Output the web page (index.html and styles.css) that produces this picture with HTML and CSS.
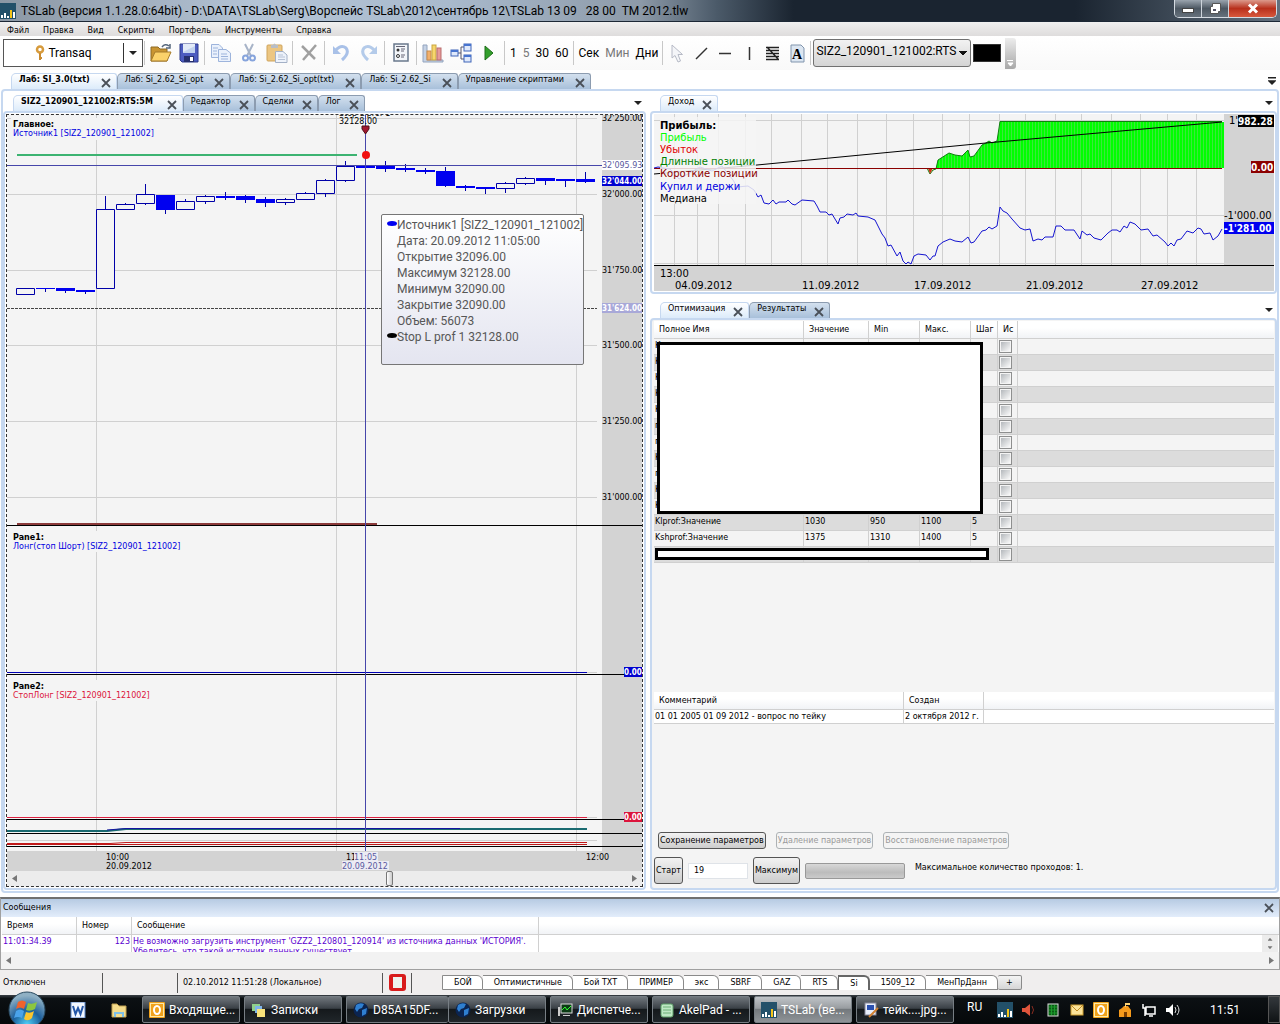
FILE: index.html
```html
<!DOCTYPE html>
<html lang="ru">
<head>
  <meta charset="UTF-8" />
  <meta name="viewport" content="width=device-width, initial-scale=1.0" />
  <title>TSLab</title>
  <link rel="stylesheet" href="styles.css">
</head>
<body>
  <svg class="defs" aria-hidden="true">
    <symbol id="close" viewBox="0 0 10 10"><path d="M1 1L9 9M9 1L1 9" fill="none" stroke="#4a5058" stroke-width="1.8"/></symbol>
    <symbol id="tslab" viewBox="0 0 16 16"><path d="M0 0H16V16H0Z" fill="#235069"/><path d="M1 12H3V15H1ZM4 10H6V15H4ZM7 13H9V15H7ZM13 9H15V15H13Z" fill="#fff"/><path d="M10 7H12V15H10Z" fill="#f5c518"/></symbol>
    <symbol id="globe" viewBox="0 0 16 16"><circle cx="8" cy="8" r="7.500" fill="#0b2450"/><path d="M3 3Q7 0 11 2L9 6L6 7L4 10L2 7ZM9 8L14 6L13 12L9 14Z" fill="#2f7fd0"/></symbol>
    <symbol id="outlook" viewBox="0 0 16 16"><rect width="16" height="16" rx="1" fill="#f0a21c"/><rect x="1.500" y="1.500" width="13" height="13" fill="none" stroke="#fde9a8"/><ellipse cx="8" cy="8" rx="3" ry="4" fill="none" stroke="#fff" stroke-width="2"/></symbol>
  </svg>

  <header class="titlebar">
    <svg class="icon16"><use href="#tslab"/></svg>
    <span class="title">TSLab (версия 1.1.28.0:64bit) - D:\DATA\TSLab\Serg\Ворспейс TSLab\2012\сентябрь 12\TSLab 13 09 &nbsp; 28 00 &nbsp;TM 2012.tlw</span>
    <div class="win-buttons">
      <button aria-label="Свернуть"><svg width="12" height="10"><rect x="0.500" y="4.500" width="11" height="4" fill="#fff" stroke="#444"/></svg></button>
      <button aria-label="Восстановить"><svg width="12" height="12"><path d="M3.500 .5H11.500V8.500H9.500V10.500H1.500V3.500H3.500Z" fill="#fff" stroke="#555"/><rect x="4" y="6" width="3" height="2" fill="#556"/></svg></button>
      <button class="win-close" aria-label="Закрыть"><svg width="12" height="11"><path d="M2 1.500L10 9.500M10 1.500L2 9.500" stroke="#fff" stroke-width="3"/></svg></button>
    </div>
  </header>

  <nav class="menu">
    <button>Файл</button>
    <button>Правка</button>
    <button>Вид</button>
    <button>Скрипты</button>
    <button>Портфель</button>
    <button>Инструменты</button>
    <button>Справка</button>
  </nav>

  <div class="toolbar">
    <div class="split">
      <button class="split-main">
        <svg width="10" height="16"><circle cx="5" cy="4.500" r="3" fill="none" stroke="#d79b3c" stroke-width="2.500"/><path d="M5 8V15M5 13H7" stroke="#c98b30" stroke-width="2"/></svg>
        Transaq
      </button>
      <button class="split-arrow" aria-label="Выбор источника"><i class="arrow"></i></button>
    </div>
    <i class="sep"></i>
    <button class="tool" aria-label="Открыть"><svg width="22" height="20" viewBox="0 0 22 20"><path d="M1 4H8L10 6H17V18H1Z" fill="#c99532" stroke="#8d6a25"/><path d="M1 18L5 9H21L17 18Z" fill="#fbd26a" stroke="#a57b2a"/><path d="M12 4Q15 0 19 3M20 1V5H16" fill="none" stroke="#56677c" stroke-width="1.500"/></svg></button>
    <button class="tool" aria-label="Сохранить"><svg width="20" height="20" viewBox="0 0 20 20"><path d="M1 1H19V19H3L1 17Z" fill="#4d5cc0" stroke="#2d3a8c"/><rect x="4" y="1" width="12" height="9" fill="#e3ebf8"/><path d="M4 9L16 3V10H4Z" fill="#c2d3ef"/><rect x="5" y="13" width="10" height="6" fill="#26306e"/><rect x="11" y="14" width="3" height="4" fill="#fff"/></svg></button>
    <i class="sep"></i>
    <button class="tool" aria-label="Копировать"><svg width="22" height="20" viewBox="0 0 22 20"><g fill="#eaf1fc" stroke="#9db4dc"><path d="M1.500 1.500H9L12.500 5V14.500H1.500Z"/><path d="M8.500 6.500H16L20.500 10V18.500H8.500Z"/><path d="M3 5H8M3 8H7M3 11H7M11 11H17M11 13.500H18M11 16H18"/></g></svg></button>
    <button class="tool" aria-label="Вырезать"><svg width="16" height="20" viewBox="0 0 16 20"><path d="M4 1L10 13M12 1L6 13" stroke="#a8b4c8" stroke-width="2"/><g fill="none" stroke="#86a4dc" stroke-width="2"><circle cx="4.500" cy="15" r="2.500"/><circle cx="11.500" cy="15" r="2.500"/></g></svg></button>
    <button class="tool" aria-label="Вставить"><svg width="22" height="20" viewBox="0 0 22 20"><rect x="1" y="2" width="15" height="16" rx="1" fill="#ecc682" stroke="#cfa45c"/><path d="M5 5V2H7Q8.500 -1 10 2H12V5Z" fill="#b9bec6"/><path d="M9.500 8.500H17L21 12V19.500H9.500Z" fill="#eef3fb" stroke="#a3b0c6"/><path d="M12 12H17M12 14H19M12 16.500H19" stroke="#b7c2d6"/></svg></button>
    <i class="sep"></i>
    <button class="tool" aria-label="Удалить"><svg width="18" height="20" viewBox="0 0 18 20"><path d="M2 3L15 16M16 2L3 17" stroke="#a0a0a0" stroke-width="2.500"/></svg></button>
    <i class="sep"></i>
    <button class="tool" aria-label="Отменить"><svg width="18" height="18" viewBox="0 0 18 18"><path d="M3 7Q9 0 14 4Q18 9 10 16" fill="none" stroke="#a9c1e8" stroke-width="3"/><path d="M1 2V10H9Z" fill="#a9c1e8"/></svg></button>
    <button class="tool" aria-label="Повторить"><svg width="18" height="18" viewBox="0 0 18 18"><path d="M15 7Q9 0 4 4Q0 9 8 16" fill="none" stroke="#b4cbea" stroke-width="3"/><path d="M17 2V10H9Z" fill="#b4cbea"/></svg></button>
    <i class="sep"></i>
    <button class="tool" aria-label="Свойства"><svg width="16" height="20" viewBox="0 0 16 20"><rect x="1" y="1" width="14" height="17" fill="#f3f6fa" stroke="#69788c" stroke-width="1.500"/><circle cx="5" cy="7" r="1.500" fill="#333"/><circle cx="5" cy="13" r="1.500" fill="none" stroke="#333"/><path d="M8 6H12M8 8H11M8 12H12M8 14H11M3 3.500H12" stroke="#667"/></svg></button>
    <i class="sep"></i>
    <button class="tool" aria-label="График"><svg width="22" height="20" viewBox="0 0 22 20"><path d="M1 2H5V17H21V19H1Z" fill="#c6d3e6" stroke="#93a4be"/><rect x="5" y="8" width="4" height="9" fill="#f2b06c" stroke="#c98b4a"/><rect x="10" y="2" width="4" height="15" fill="#f7d66d" stroke="#c9a63e"/><rect x="15" y="5" width="4" height="12" fill="#e79a9a" stroke="#b96d6d"/></svg></button>
    <button class="tool" aria-label="Схема"><svg width="22" height="20" viewBox="0 0 22 20"><path d="M8 10H11M11 4V16M11 4H14M11 16H14" fill="none" stroke="#556"/><g fill="#dfe9fb" stroke="#3f65b8"><rect x="1" y="7" width="7" height="6"/><rect x="14" y="1" width="7" height="7"/><rect x="14" y="12" width="7" height="7"/></g><path d="M1 7H8V9H1ZM14 1H21V3H14ZM14 12H21V14H14Z" fill="#4774cf"/></svg></button>
    <button class="tool" aria-label="Запуск"><svg width="10" height="16" viewBox="0 0 10 16"><path d="M1 1L9 8L1 15Z" fill="#33a02c" stroke="#1f6f1a"/></svg></button>
    <i class="sep"></i>
    <button class="word">1</button>
    <button class="word dim">5</button>
    <button class="word">30</button>
    <button class="word">60</button>
    <i class="sep"></i>
    <button class="word">Сек</button>
    <button class="word dim">Мин</button>
    <button class="word">Дни</button>
    <i class="sep"></i>
    <button class="tool narrow" aria-label="Указатель"><svg width="13" height="19" viewBox="0 0 13 19"><path d="M1 1V14L4 11.500L7 18L9.500 17L7 10.500H11.500Z" fill="#f4f5f8" stroke="#b6bac6"/></svg></button>
    <button class="tool narrow" aria-label="Линия"><svg width="13" height="13"><path d="M1 12L12 1" stroke="#333" stroke-width="1.500"/></svg></button>
    <button class="tool narrow" aria-label="Горизонтальная линия"><svg width="13" height="13"><path d="M0 6.500H12" stroke="#333" stroke-width="1.500"/></svg></button>
    <button class="tool narrow" aria-label="Вертикальная линия"><svg width="13" height="13"><path d="M6.500 0V13" stroke="#333" stroke-width="1.500"/></svg></button>
    <button class="tool narrow" aria-label="Фибоначчи"><svg width="14" height="15"><path d="M0 1.500H13M0 4.500H13M0 7.500H13M0 10.500H13M0 13.500H13M1 1L12 13" stroke="#222" stroke-width="1.500"/></svg></button>
    <button class="tool narrow" aria-label="Надпись"><svg width="15" height="19" viewBox="0 0 15 19"><path d="M1 1H11L14 4V18H1Z" fill="#dce6f1" stroke="#8195ad"/><text x="2" y="15" class="glyph-a">A</text></svg></button>
    <i class="sep"></i>
    <select class="instrument" aria-label="Инструмент">
      <option>SIZ2_120901_121002:RTS</option>
    </select>
    <button class="swatch" aria-label="Цвет"></button>
    <button class="overflow" aria-label="Ещё"><svg width="7" height="6"><path d="M0 .5H6M1 3H6L3.500 6Z" stroke="#fff" fill="#fff"/></svg></button>
  </div>

  <main class="workspace">
    <div class="tabs docs">
      <div class="tab active"><button>Лаб: SI_3.0(txt)</button><button class="x" aria-label="Закрыть"><svg><use href="#close"/></svg></button></div>
      <div class="tab"><button>Лаб: Si_2.62_Si_opt</button><button class="x" aria-label="Закрыть"><svg><use href="#close"/></svg></button></div>
      <div class="tab"><button>Лаб: Si_2.62_Si_opt(txt)</button><button class="x" aria-label="Закрыть"><svg><use href="#close"/></svg></button></div>
      <div class="tab"><button>Лаб: Si_2.62_Si</button><button class="x" aria-label="Закрыть"><svg><use href="#close"/></svg></button></div>
      <div class="tab"><button>Управление скриптами</button><button class="x" aria-label="Закрыть"><svg><use href="#close"/></svg></button></div>
      <button class="tab-list double" aria-label="Список вкладок"><i class="arrow"></i></button>
    </div>

    <div class="frame outer">
      <section class="pane">
        <div class="tabs">
          <div class="tab active"><button>SIZ2_120901_121002:RTS:5M</button><button class="x" aria-label="Закрыть"><svg><use href="#close"/></svg></button></div>
          <div class="tab"><button>Редактор</button><button class="x" aria-label="Закрыть"><svg><use href="#close"/></svg></button></div>
          <div class="tab"><button>Сделки</button><button class="x" aria-label="Закрыть"><svg><use href="#close"/></svg></button></div>
          <div class="tab"><button>Лог</button><button class="x" aria-label="Закрыть"><svg><use href="#close"/></svg></button></div>
          <button class="tab-list" aria-label="Список вкладок"><i class="arrow"></i></button>
        </div>
        <div class="frame fill">
          <div class="chart-box">
            <svg class="chart" viewBox="7 115 635 756">
              <path d="M602 115H642V851H602ZM7 851H642V871H7Z" fill="#d3d3d3"/>
              <!-- grid -->
              <path d="M96.500 115V851M336.500 115V851M576.500 115V851M7 118.500H597M7 194.500H597M7 270.500H597M7 345.500H597M7 421.500H597M7 497.500H597M7 672.500H597M7 817.500H597M7 840.500H597" stroke="#d0d0d0"/>
              <path d="M7 308.500H597" stroke="#444" stroke-dasharray="3 1"/>
              <path d="M11 118H158V140H11ZM11 531H186V552H11ZM11 680H156V701H11Z" fill="#f4f4f4"/>
              <!-- stops -->
              <path d="M17 155H357" stroke="#3cb371" stroke-width="2"/>
              <path d="M17 524H377" stroke="#8b3a3a" stroke-width="2"/>
              <path d="M7 525.500H642M7 674.500H642M7 819.500H642M7 833.500H642M7 846.500H642" stroke="#000"/>
              <path d="M7 672.500H587" stroke="#0000b4"/>
              <path d="M7 817.500H587" stroke="#dc2040"/>
              <path d="M7 831H107L126 829H587" fill="none" stroke="#1a6a70" stroke-width="2"/>
              <path d="M107 830L126 828.500H460" fill="none" stroke="#1414a0"/>
              <path d="M7 844.500H587M7 843.500H110L126 842.500H587" fill="none" stroke="#c01818"/>
              <!-- candles -->
              <g fill="#f4f4f4" stroke="#0000a8">
                <path d="M45.500 288V292M65.500 288V293M85.500 290V294M105.500 196V209M125.500 203V209M145.500 184V205M165.500 195V214M185.500 199V209M205.500 195V204M225.500 192V200M245.500 195V203M265.500 197V207M285.500 198V205M305.500 192V199M325.500 179V197M345.500 161V182M385.500 161V172M405.500 164V172M425.500 168V174M445.500 167V187M465.500 185V191M485.500 187V194M505.500 182V193M525.500 177V185M545.500 178V185M565.500 179V187M585.500 172V183"/>
                <path d="M16.500 288.500H34.500V294.500H16.500ZM96.500 209.500H114.500V288.500H96.500ZM116.500 204.500H134.500V209.500H116.500ZM136.500 194.500H154.500V203.500H136.500ZM176.500 201.500H194.500V209.500H176.500ZM196.500 196.500H214.500V201.500H196.500ZM276.500 199.500H294.500V202.500H276.500ZM296.500 193.500H314.500V199.500H296.500ZM316.500 180.500H334.500V193.500H316.500ZM336.500 166.500H354.500V180.500H336.500ZM496.500 183.500H514.500V188.500H496.500ZM516.500 178.500H534.500V183.500H516.500Z"/>
              </g>
              <path d="M36 288H55V289H36ZM56 288H75V291H56ZM76 290H95V292H76ZM156 195H175V210H156ZM216 196H235V198H216ZM236 196H255V200H236ZM256 199H275V203H256ZM356 166H375V168H356ZM376 166H395V169H376ZM396 168H415V170H396ZM416 170H435V172H416ZM436 171H455V186H436ZM456 186H475V188H456ZM476 187H495V189H476ZM536 178H555V181H536ZM556 179H575V181H556ZM576 179H595V182H576Z" fill="#0000f0"/>
              <!-- crosshair -->
              <path d="M7 165.500H602M365.500 115V851" stroke="#4646aa"/>
              <text x="339" y="116">Stop L prof 1</text>
              <text x="339" y="124">32128.00</text>
              <path d="M362 126H369V129L365.500 134L362 129Z" fill="#a01830" stroke="#501018"/>
              <circle cx="366" cy="155" r="4" fill="#f01010"/>

              <text x="13" y="127" class="b">Главное:</text>
              <text x="13" y="136" class="blue">Источник1 [SIZ2_120901_121002]</text>
              <text x="13" y="540" class="b">Pane1:</text>
              <text x="13" y="549" class="blue">Лонг(стоп Шорт) [SIZ2_120901_121002]</text>
              <text x="13" y="689" class="b">Pane2:</text>
              <text x="13" y="698" class="crimson">СтопЛонг [SIZ2_120901_121002]</text>

              <text x="602" y="121">32'250.00</text>
              <text x="602" y="197">32'000.00</text>
              <text x="602" y="273">31'750.00</text>
              <text x="602" y="348">31'500.00</text>
              <text x="602" y="424">31'250.00</text>
              <text x="602" y="500">31'000.00</text>
              <path d="M602 160H642V170H602Z" fill="#fff"/>
              <text x="602" y="168" class="slate">32'095.93</text>
              <path d="M602 176H642V186H602Z" fill="#0000d0"/>
              <text x="602" y="184" class="inv">32'044.00</text>
              <path d="M602 303H642V313H602Z" fill="#a8a8d8"/>
              <text x="602" y="311" class="inv">31'624.00</text>
              <path d="M624 667H642V677H624Z" fill="#0000d0"/>
              <text x="624" y="675" class="inv">0.00</text>
              <path d="M624 812H642V822H624Z" fill="#dc143c"/>
              <text x="624" y="820" class="inv">0.00</text>

              <text x="106" y="860">10:00</text>
              <text x="106" y="869">20.09.2012</text>
              <text x="346" y="860">11:00</text>
              <path d="M354 852H378V861H354ZM342 861H389V870H342Z" fill="#ececf4"/>
              <text x="354" y="860" class="slate">11:05</text>
              <text x="342" y="869" class="slate">20.09.2012</text>
              <text x="586" y="860">12:00</text>
            </svg>
            <div class="tooltip">
              <p><i class="dot blue-dot"></i>Источник1 [SIZ2_120901_121002]</p>
              <p>Дата: 20.09.2012 11:05:00</p>
              <p>Открытие 32096.00</p>
              <p>Максимум 32128.00</p>
              <p>Минимум 32090.00</p>
              <p>Закрытие 32090.00</p>
              <p>Объем: 56073</p>
              <p><i class="dot"></i>Stop L prof 1 32128.00</p>
            </div>
            <div class="scroll">
              <button class="step left" aria-label="Назад"></button>
              <button class="thumb" aria-label="Положение"></button>
              <button class="step right" aria-label="Вперёд"></button>
            </div>
          </div>
        </div>
      </section>

      <div class="side">
        <section class="pane income">
          <div class="tabs">
            <div class="tab active plain"><button>Доход</button><button class="x" aria-label="Закрыть"><svg><use href="#close"/></svg></button></div>
            <button class="tab-list" aria-label="Список вкладок"><i class="arrow"></i></button>
          </div>
          <div class="frame fill">
            <svg class="chart big" viewBox="654 114 620 177">
              <defs>
                <pattern id="bars" width="3" height="10" patternUnits="userSpaceOnUse"><path d="M0 0H3V10H0Z" fill="#00ff00"/><path d="M0 0H1V10H0Z" fill="#3ce83c"/></pattern>
              </defs>
              <path d="M1224 114H1274V265H1224ZM654 265H1274V291H654Z" fill="#d3d3d3"/>
              <path d="M674.500 114V265M697.500 114V265M718.500 114V265M745.500 114V265M771.500 114V265M801.500 114V265M827.500 114V265M857.500 114V265M886.500 114V265M913.500 114V265M942.500 114V265M969.500 114V265M999.500 114V265M1025.500 114V265M1055.500 114V265M1081.500 114V265M1111.500 114V265M1140.500 114V265M1167.500 114V265M1196.500 114V265M654 120.500H1224M654 215.500H1224M654 263.500H1224" stroke="#d0d0d0"/>
              <path d="M936 168L938 160L949 153L955 155L962 156L968 150L970 157L974 156L982 145L986 143L989 141L992 143L997 141L1000 122H1224V168Z" fill="url(#bars)"/>
              <path d="M927 168L930 174L933 170L936 169L938 160L949 153L955 155L962 156L968 150L970 157L974 156L982 145L986 143L989 141L992 143L997 141L1000 121.500H1222" fill="none" stroke="#108010"/>
              <path d="M928 168L930 174L933 168Z" fill="#d03010"/>
              <path d="M654 174L757 165L986 143L1222 122" fill="none" stroke="#000"/>
              <path d="M654 168.500H1222" stroke="#8b0000"/>
              <path d="M654 168L658 167L670 169L679 179L700 167L712 171L722 166L733 180L737 187L748 186L754 190L758 197L761 195L764 203L769 204L773 200L776 204L779 202L786 202L788 200L792 204L795 205L802 200L814 201L817 206L820 212L826 212L829 215L832 214L838 224L840 218L844 217L847 214L853 215L856 213L858 216L868 217L875 220L882 234L885 238L888 246L891 245L897 256L900 252L903 261L906 264L908 262L911 264L914 256L918 254L926 255L930 260L933 256L935 256L938 246L943 242L950 239L955 241L962 242L968 237L971 243L974 242L982 231L986 230L989 227L992 229L997 226L1000 207L1003 211L1007 213L1012 219L1020 228L1025 230L1030 229L1033 241L1038 239L1042 240L1045 237L1053 237L1056 226L1061 226L1065 230L1074 230L1080 239L1082 231L1087 235L1090 234L1094 238L1101 240L1108 233L1112 230L1117 230L1120 232L1124 226L1127 228L1130 222L1135 224L1138 227L1141 230L1148 229L1153 236L1157 235L1165 242L1168 246L1171 243L1174 246L1177 240L1181 239L1187 231L1193 233L1198 228L1201 229L1204 234L1210 233L1213 240L1218 236L1222 229" fill="none" stroke="#1414d0"/>
              <path d="M654 265.500H1274" stroke="#000"/>
              <path d="M660 117H756V204H660Z" fill="#f4f4f4" fill-opacity="0.850"/>
              <text x="660" y="129" class="b">Прибыль:</text>
              <text x="660" y="141" class="lime">Прибыль</text>
              <text x="660" y="153" class="red">Убыток</text>
              <text x="660" y="165" class="green">Длинные позиции</text>
              <text x="660" y="177" class="maroon">Короткие позиции</text>
              <text x="660" y="190" class="blue">Купил и держи</text>
              <text x="660" y="202">Медиана</text>
              <text x="1229" y="124">1'</text>
              <path d="M1238 115H1274V127H1238Z" fill="#000"/>
              <text x="1238" y="125" class="inv">982.28</text>
              <path d="M1251 161H1274V173H1251Z" fill="#8b0000"/>
              <text x="1251" y="171" class="inv">0.00</text>
              <text x="1224" y="219">-1'000.00</text>
              <path d="M1224 222H1274V234H1224Z" fill="#0000f0"/>
              <text x="1224" y="232" class="inv">-1'281.00</text>
              <text x="660" y="277">13:00</text>
              <text x="675" y="289">04.09.2012</text>
              <text x="802" y="289">11.09.2012</text>
              <text x="914" y="289">17.09.2012</text>
              <text x="1026" y="289">21.09.2012</text>
              <text x="1141" y="289">27.09.2012</text>
            </svg>
          </div>
        </section>

        <section class="pane optimize">
          <div class="tabs">
            <div class="tab active plain"><button>Оптимизация</button><button class="x" aria-label="Закрыть"><svg><use href="#close"/></svg></button></div>
            <div class="tab"><button>Результаты</button><button class="x" aria-label="Закрыть"><svg><use href="#close"/></svg></button></div>
            <button class="tab-list" aria-label="Список вкладок"><i class="arrow"></i></button>
          </div>
          <div class="frame fill column">
            <div class="params">
              <table class="grid">
                <colgroup><col class="c-name"><col class="c-value"><col class="c-min"><col class="c-max"><col class="c-step"><col class="c-use"><col></colgroup>
                <thead>
                  <tr><th>Полное Имя</th><th>Значение</th><th>Min</th><th>Макс.</th><th>Шаг</th><th>Ис</th><th></th></tr>
                </thead>
                <tbody>
                  <tr><td>К</td><td></td><td></td><td></td><td></td><td><input type="checkbox" aria-label="Использовать"></td><td></td></tr>
                  <tr><td>К</td><td></td><td></td><td></td><td></td><td><input type="checkbox" aria-label="Использовать"></td><td></td></tr>
                  <tr><td>К</td><td></td><td></td><td></td><td></td><td><input type="checkbox" aria-label="Использовать"></td><td></td></tr>
                  <tr><td>К</td><td></td><td></td><td></td><td></td><td><input type="checkbox" aria-label="Использовать"></td><td></td></tr>
                  <tr><td>К</td><td></td><td></td><td></td><td></td><td><input type="checkbox" aria-label="Использовать"></td><td></td></tr>
                  <tr><td>п</td><td></td><td></td><td></td><td></td><td><input type="checkbox" aria-label="Использовать"></td><td></td></tr>
                  <tr><td>п</td><td></td><td></td><td></td><td></td><td><input type="checkbox" aria-label="Использовать"></td><td></td></tr>
                  <tr><td>К</td><td></td><td></td><td></td><td></td><td><input type="checkbox" aria-label="Использовать"></td><td></td></tr>
                  <tr><td>п</td><td></td><td></td><td></td><td></td><td><input type="checkbox" aria-label="Использовать"></td><td></td></tr>
                  <tr><td>К</td><td></td><td></td><td></td><td></td><td><input type="checkbox" aria-label="Использовать"></td><td></td></tr>
                  <tr><td>К</td><td></td><td></td><td></td><td></td><td><input type="checkbox" aria-label="Использовать"></td><td></td></tr>
                  <tr><td>Klprof:Значение</td><td>1030</td><td>950</td><td>1100</td><td>5</td><td><input type="checkbox" aria-label="Klprof"></td><td></td></tr>
                  <tr><td>Kshprof:Значение</td><td>1375</td><td>1310</td><td>1400</td><td>5</td><td><input type="checkbox" aria-label="Kshprof"></td><td></td></tr>
                  <tr><td></td><td></td><td></td><td></td><td></td><td><input type="checkbox" aria-label="Использовать"></td><td></td></tr>
                </tbody>
              </table>
              <div class="cover cover-large"></div>
              <div class="cover cover-small"></div>
            </div>
            <div class="comments">
              <table class="grid white">
                <colgroup><col class="c-comment"><col class="c-created"><col></colgroup>
                <thead><tr><th>Комментарий</th><th>Создан</th><th></th></tr></thead>
                <tbody><tr><td>01 01 2005 01 09 2012 - вопрос по тейку</td><td>2 октября 2012 г.</td><td></td></tr></tbody>
              </table>
            </div>
            <div class="actions">
              <button class="btn">Сохранение параметров</button>
              <button class="btn" disabled>Удаление параметров</button>
              <button class="btn" disabled>Восстановление параметров</button>
            </div>
            <div class="run">
              <button class="btn tall">Старт</button>
              <input type="text" value="19" aria-label="Количество проходов">
              <button class="btn tall">Максимум</button>
              <div class="progress" role="progressbar" aria-label="Ход оптимизации"></div>
              <span>Максимальное количество проходов: 1.</span>
            </div>
          </div>
        </section>
      </div>
    </div>
  </main>

  <section class="messages">
    <div class="messages-head"><span>Сообщения</span><button class="x" aria-label="Закрыть"><svg><use href="#close"/></svg></button></div>
    <div class="messages-body">
      <table class="grid white">
        <colgroup><col class="c-time"><col class="c-number"><col class="c-text"><col></colgroup>
        <thead><tr><th>Время</th><th>Номер</th><th>Сообщение</th><th></th></tr></thead>
        <tbody><tr><td>11:01:34.39</td><td class="num">123</td><td>Не возможно загрузить инструмент 'GZZ2_120801_120914' из источника данных 'ИСТОРИЯ'.<br>Убедитесь, что такой источник данных существует.</td><td></td></tr></tbody>
      </table>
      <div class="vscroll"><button class="step up" aria-label="Вверх"></button><button class="step down" aria-label="Вниз"></button></div>
    </div>
    <div class="scroll">
      <button class="step left" aria-label="Назад"></button>
      <button class="step right" aria-label="Вперёд"></button>
    </div>
  </section>

  <footer class="status">
    <span class="state">Отключен</span>
    <span class="blank"></span>
    <span class="clock">02.10.2012 11:51:28 (Локальное)</span>
    <span class="flag"><i></i></span>
    <div class="books">
      <button>БОЙ</button>
      <button>Оптимистичные</button>
      <button>Бой ТХТ</button>
      <button>ПРИМЕР</button>
      <button>экс</button>
      <button>SBRF</button>
      <button>GAZ</button>
      <button>RTS</button>
      <button class="current">Si</button>
      <button>1509_12</button>
      <button>МенПрДанн</button>
      <button class="add">+</button>
    </div>
  </footer>

  <div class="taskbar">
    <button class="start" aria-label="Пуск">
      <svg width="38" height="38" viewBox="0 0 38 38">
        <defs><radialGradient id="orb" cx="50%" cy="90%" r="80%"><stop offset="0" stop-color="#4fd0f8"/><stop offset="0.500" stop-color="#1c5f9c"/><stop offset="1" stop-color="#8fb0c4"/></radialGradient></defs>
        <circle cx="19" cy="19" r="18" fill="url(#orb)" stroke="#2a4a60"/>
        <path d="M10 11Q14 8 18 11L16 18Q12 15 8 18Z" fill="#f0632c"/><path d="M20 12Q24 14 29 11L27 18Q22 21 18 19Z" fill="#8cc63f"/>
        <path d="M8 20Q12 17 16 20L14 27Q10 25 6 27Z" fill="#4aa3ea"/><path d="M18 21Q22 23 26 20L24 27Q20 31 16 28Z" fill="#fbc52d"/>
      </svg>
    </button>
    <button class="pin" aria-label="Word"><svg width="16" height="16"><rect x="1" width="14" height="16" fill="#f4f8ff" stroke="#5a86c8"/><path d="M3 4L5.500 12L8 6L10.500 12L13 4" fill="none" stroke="#2457a8" stroke-width="2"/></svg></button>
    <button class="pin" aria-label="Проводник"><svg width="16" height="16"><path d="M1 2H6L8 4H15V15H1Z" fill="#f5dc8c" stroke="#c0a050"/><path d="M3 10H13V15H3Z" fill="#7fc0e8"/><path d="M5 12H11V15H5Z" fill="#f5dc8c"/></svg></button>
    <div class="tasks">
      <button><svg class="icon16"><use href="#outlook"/></svg>Входящие...</button>
      <button><svg class="icon16"><path d="M1 2H9V9H1Z" fill="#8fd08a"/><path d="M4 4H11V11H4Z" fill="#7fb4e8"/><path d="M6 7H14V15H6Z" fill="#f8e27a"/></svg>Записки</button>
      <button class="joined"><svg class="icon16"><use href="#globe"/></svg>D85A15DF...</button>
      <button><svg class="icon16"><use href="#globe"/></svg>Загрузки</button>
      <button><svg class="icon16"><rect x="4" y="2" width="11" height="9" fill="#0b3b14" stroke="#ddd"/><path d="M5 8L8 5L10 8L14 4" fill="none" stroke="#3f3"/><path d="M1 5H3V14H1ZM6 13H13V14H6Z" fill="#ccc"/></svg>Диспетче...</button>
      <button><svg class="icon16"><rect x="2" y="2" width="12" height="13" rx="2" fill="#bfe8c4" stroke="#5fa068"/><path d="M4 5H12M4 8H12M4 11H12" stroke="#6fb078"/></svg>AkelPad - ...</button>
      <button class="current"><svg class="icon16"><use href="#tslab"/></svg>TSLab (ве...</button>
      <button><svg class="icon16"><rect x="2" y="1" width="11" height="12" fill="#e8eefc" stroke="#889"/><path d="M4 3H11V8H4Z" fill="#2a50b0"/><path d="M15 6L8 13L6 15" stroke="#d08030" stroke-width="2"/></svg>тейк....jpg...</button>
    </div>
    <div class="tray">
      <span class="lang">RU</span>
      <svg class="icon16"><use href="#tslab"/></svg>
      <svg class="icon16"><path d="M1 6H4L9 2V14L4 10H1Z" fill="#e0553c"/><path d="M11 4Q14 8 11 12" fill="none" stroke="#8a2c20"/></svg>
      <svg class="icon16"><rect x="3" y="2" width="10" height="12" fill="#0a5a14" stroke="#ddd"/><path d="M4 5H12M4 8H12M4 11H12M6.500 3V13M9.500 3V13" stroke="#1c9a2c"/></svg>
      <svg class="icon16"><rect x="2" y="3" width="12" height="10" fill="#fbe39a" stroke="#d0a030"/><path d="M2 3L8 9L14 3" fill="none" stroke="#c08a20"/></svg>
      <svg class="icon16"><use href="#outlook"/></svg>
      <svg class="icon16"><path d="M2 8L5 6L7 4L11 4L14 8V15H2Z" fill="#f59a1c"/><path d="M8.500 1V5" stroke="#ffd070"/><path d="M9 1H13V3H9Z" fill="#ffd070"/><rect x="7" y="10" width="3" height="5" fill="#7a3c00"/></svg>
      <svg class="icon16"><path d="M5 5H14V12H5ZM8 14H12M2 2V6H4V14" fill="none" stroke="#fff" stroke-width="1.500"/></svg>
      <svg class="icon16"><path d="M1 6H4L8 2V14L4 10H1Z" fill="#fff"/><path d="M10 5Q12 8 10 11M12 3Q16 8 12 13" fill="none" stroke="#ddd"/></svg>
      <time>11:51</time>
      <button class="show-desktop" aria-label="Свернуть все окна"></button>
    </div>
  </div>
</body>
</html>
```
FILE: styles.css
```css
* {
  box-sizing: border-box;
}
body {
  margin: 0;
  height: 100vh;
  display: flex;
  flex-direction: column;
  overflow: hidden;
  background: #fff;
  color: #000;
  font: 8px/10px "DejaVu Sans", Verdana, sans-serif;
}
button, input, select {
  margin: 0;
  padding: 0;
  border: 0;
  background: none;
  color: inherit;
  font: inherit;
}
p {
  margin: 0;
}
svg {
  display: block;
  flex: none;
}
.defs {
  position: absolute;
  width: 0;
  height: 0;
}
.icon16 {
  width: 16px;
  height: 16px;
}
.arrow {
  width: 8px;
  height: 4px;
  background: #222;
  clip-path: polygon(0 0, 100% 0, 50% 100%);
}

/* window title */
.titlebar {
  flex: none;
  display: flex;
  align-items: center;
  gap: 5px;
  height: 22px;
  border-bottom: 1px solid #1c2836;
  background: linear-gradient(to right, #8b97a4 0, #b4c4d6 20%, #a9bacd 35%, #8d9aa8 50%, #4b5a69 56%, #1a2430 62%, #1a2430 84%, #62707e 100%);
}
.title {
  font: 12px/20px Roboto, "Segoe UI", sans-serif;
  white-space: nowrap;
}
.win-buttons {
  display: flex;
  align-self: flex-start;
  margin: 0 3px 0 auto;
  border: 1px solid #d5dbe2;
  border-top: 0;
  border-radius: 0 0 5px 5px;
  overflow: hidden;
}
.win-buttons button {
  display: flex;
  align-items: center;
  justify-content: center;
  width: 27px;
  height: 17px;
  border-right: 1px solid #cdd4dc;
  background: linear-gradient(#9aa4ae, #4c5762 50%, #66717c);
}
.win-buttons .win-close {
  width: 47px;
  border-right: 0;
  background: linear-gradient(#dc9a8c, #b8301c 50%, #d8583c);
}

.menu {
  flex: none;
  display: flex;
  align-items: flex-end;
  gap: 14px;
  height: 14px;
  padding-left: 7px;
  background: linear-gradient(#f0f0f0, #dedcdc);
}

/* toolbar */
.toolbar {
  flex: none;
  display: flex;
  align-items: center;
  height: 34px;
  padding-left: 3px;
  background: linear-gradient(#fff, #f9f9f9);
  font: 12px/16px Roboto, "Segoe UI", sans-serif;
}
.split {
  display: flex;
  align-items: center;
  width: 140px;
  height: 28px;
  border: 1px solid #555;
  background: #fff;
}
.split-main {
  flex: 1;
  display: flex;
  align-items: center;
  justify-content: center;
  gap: 3px;
}
.split-arrow {
  display: flex;
  align-items: center;
  justify-content: center;
  width: 19px;
  height: 20px;
  border-left: 1px solid #333;
}
.sep {
  flex: none;
  width: 1px;
  height: 24px;
  margin: 0 2px 0 1px;
  background: #c8c8c8;
}
.tool {
  display: flex;
  align-items: center;
  justify-content: center;
  width: 28px;
  height: 28px;
}
.tool.narrow {
  width: 24px;
}
.glyph-a {
  font: bold 14px "Liberation Serif", serif;
}
.word {
  padding: 0 3px;
}
.dim {
  color: #777;
}
.instrument {
  appearance: none;
  width: 158px;
  height: 28px;
  padding: 0 12px 4px 2px;
  border: 1px solid #707070;
  border-radius: 3px;
  background: linear-gradient(45deg, transparent 50%, #111 50%) right 7px center / 4px 4px no-repeat, linear-gradient(-45deg, transparent 50%, #111 50%) right 3px center / 4px 4px no-repeat, linear-gradient(#f2f2f2, #d4d4d4);
}
.swatch {
  width: 28px;
  height: 18px;
  margin: 0 4px 0 2px;
  border: 1px solid #333;
  background: #000;
}
.overflow {
  display: flex;
  align-items: flex-end;
  justify-content: center;
  width: 11px;
  height: 31px;
  padding-bottom: 3px;
  border-radius: 0 3px 3px 0;
  background: linear-gradient(#ededed, #a8a8a8);
}

/* tabs and frames */
.workspace {
  flex: 1;
  min-height: 0;
  display: flex;
  flex-direction: column;
  padding: 3px 1px 4px;
}
.tabs {
  flex: none;
  display: flex;
  height: 16px;
  padding-left: 10px;
}
.tab {
  display: flex;
  gap: 8px;
  padding: 0 5px 0 7px;
  border: 1px solid #8c9cb0;
  border-bottom: 0;
  border-radius: 5px 3px 0 0;
  background: linear-gradient(#d3e0ee, #a8c0da);
}
.tab button {
  height: 12px;
  white-space: nowrap;
}
.tab.active {
  gap: 14px;
  border-color: #c6d8f0;
  background: linear-gradient(#fff, #dcebfa);
  font-weight: bold;
}
.docs .tab {
  gap: 11px;
}
.tab.plain {
  gap: 8px;
  font-weight: normal;
}
.x svg {
  width: 10px;
  height: 10px;
}
.tab .x {
  align-self: flex-end;
  height: 13px;
}
.tab-list {
  margin: 0 4px 0 auto;
  display: flex;
  align-items: center;
}
.tab-list.double {
  margin-right: 3px;
}
.double .arrow {
  width: 8px;
  height: 8px;
  clip-path: polygon(0 0, 100% 0, 100% 20%, 0 20%, 0 40%, 100% 40%, 100% 50%, 50% 100%, 0 50%, 0 20%);
}
.frame {
  border: 2px solid #c6d8f0;
  border-radius: 4px;
}
.outer {
  flex: 1;
  min-height: 0;
  display: grid;
  grid-template-columns: 643fr 627fr;
  gap: 4px;
  padding: 4px 0 1px;
}
.pane {
  display: flex;
  flex-direction: column;
  min-width: 0;
  min-height: 0;
}
.fill {
  flex: 1;
  min-height: 0;
  padding: 1px;
}
.side {
  display: flex;
  flex-direction: column;
  gap: 8px;
  min-width: 0;
  min-height: 0;
}
.side .fill {
  padding-left: 2px;
}
.optimize {
  flex: 1;
}
.column {
  display: flex;
  flex-direction: column;
  background: #f4f4f4;
}

/* charts */
.chart-box {
  position: relative;
  display: flex;
  flex-direction: column;
  height: 100%;
  border: 1px dashed #333;
  background: #f4f4f4;
}
.chart {
  width: 100%;
  flex: 1;
  min-height: 0;
  background: #f4f4f4;
  font-size: 8px;
}
.chart.big {
  font-size: 10px;
}
.b {
  font-weight: bold;
}
.blue {
  fill: #0000e0;
}
.crimson {
  fill: #dc143c;
}
.slate {
  fill: #5a5aa0;
}
.inv {
  fill: #fff;
  font-weight: bold;
}
.chart .inv {
  font-family: "DejaVu Sans Condensed", "DejaVu Sans", sans-serif;
}
.lime {
  fill: #00ff00;
}
.red {
  fill: #e00000;
}
.green {
  fill: #008000;
}
.maroon {
  fill: #8b0000;
}
.tooltip {
  position: absolute;
  left: 374px;
  top: 99px;
  width: 203px;
  height: 151px;
  padding: 2px 0 0 15px;
  border: 1px solid #767676;
  border-radius: 2px;
  background: linear-gradient(#fff, #e4e5f0);
  color: #575757;
  font: 12px/16px Roboto, "Segoe UI", sans-serif;
  white-space: nowrap;
}
.dot {
  display: inline-block;
  width: 10px;
  height: 5px;
  margin: 0 0 3px -10px;
  border-radius: 50%;
  background: #000;
}
.blue-dot {
  background: #0000f0;
}
.scroll {
  flex: none;
  display: flex;
  align-items: center;
  height: 15px;
  padding: 0 5px;
  background: #ececec;
}
.step {
  width: 5px;
  height: 7px;
  background: #777;
}
.left {
  clip-path: polygon(100% 0, 100% 100%, 0 50%);
}
.right {
  margin-left: auto;
  clip-path: polygon(0 0, 100% 50%, 0 100%);
}
.thumb {
  width: 7px;
  height: 15px;
  margin-left: 59%;
  border: 1px solid #777;
  border-radius: 2px;
  background: linear-gradient(to right, #fff, #ccc);
}

/* tables */
.grid {
  width: 100%;
  border-collapse: separate;
  border-spacing: 0;
  table-layout: fixed;
}
.grid th, .grid td {
  height: 16px;
  padding: 0 1px;
  border-right: 1px solid #d0d0d0;
  border-bottom: 1px solid #d0d0d0;
  text-align: left;
  font-weight: normal;
  white-space: nowrap;
  overflow: hidden;
}
.params td {
  padding-bottom: 2px;
}
.grid th {
  height: 18px;
  padding: 1px 1px 0 5px;
  background: linear-gradient(#fff 40%, #f1f3f6);
}
.grid th:last-child, .grid td:last-child {
  border-right: 0;
}
.params .grid tbody tr:nth-child(even) {
  background: #dcdcdc;
}
.white td {
  background: #fff;
}
.c-name { width: 150px; }
.c-value { width: 65px; }
.c-min { width: 51px; }
.c-max { width: 51px; }
.c-step { width: 27px; }
.c-use { width: 20px; }
.c-comment { width: 250px; }
.c-created { width: 80px; }
.c-time { width: 75px; }
.c-number { width: 55px; }
.c-text { width: 407px; }
.grid input {
  appearance: none;
  display: block;
  width: 13px;
  height: 13px;
  border: 1px solid #8e8f8f;
  background: linear-gradient(135deg, #b4b8bc, #fafafa) center / 9px 9px no-repeat, #f4f4f4;
}
.params td:nth-child(6) {
  padding-bottom: 0;
}
.params {
  position: relative;
  flex: 1;
  min-height: 0;
}
.cover {
  position: absolute;
  border: 3px solid #000;
  background: #fff;
}
.cover-large {
  left: 3px;
  top: 21px;
  width: 326px;
  height: 172px;
}
.cover-small {
  left: 1px;
  top: 227px;
  width: 334px;
  height: 12px;
}
.comments {
  flex: none;
  height: 140px;
}
.comments td {
  height: 14px;
}

/* buttons under the tables */
.btn {
  height: 17px;
  padding: 0 1px;
  border: 1px solid #555;
  border-radius: 3px;
  background: linear-gradient(#f2f2f2, #cdcdcd);
}
.btn:disabled {
  border-color: #adb2b5;
  background: #f4f4f4;
  color: #9a9a9a;
}
.btn.tall {
  height: 27px;
}
.actions {
  flex: none;
  display: flex;
  gap: 10px;
  padding: 0 4px;
}
.run {
  flex: none;
  display: flex;
  align-items: center;
  gap: 5px;
  padding: 8px 0 3px;
}
.run input {
  width: 60px;
  height: 16px;
  padding: 0 5px;
  border: 1px solid #dfe3e8;
  background: #fff;
}
.progress {
  width: 100px;
  height: 16px;
  border: 1px solid #999;
  border-radius: 2px;
  background: linear-gradient(#d8d8d8, #bcbcbc 60%, #cacaca);
}
.run span {
  padding: 0 5px 6px;
}

/* messages */
.messages {
  flex: none;
  border: 1px solid #a0a0a0;
  border-top: 2px solid #707070;
  background: #f2f2f2;
}
.messages-head {
  display: flex;
  justify-content: space-between;
  align-items: center;
  height: 18px;
  padding: 0 5px 0 2px;
  background: linear-gradient(#b7cbe3, #e3edfb);
}
.messages-body {
  position: relative;
  height: 35px;
  padding: 0 0 0 1px;
  overflow: hidden;
  background: #fff;
}
.messages-body td {
  padding-top: 2px;
  color: #5a00d0;
  vertical-align: top;
}
.messages-body .num {
  text-align: right;
}
.vscroll {
  position: absolute;
  right: 1px;
  bottom: 0;
  display: flex;
  flex-direction: column;
  align-items: center;
  justify-content: space-around;
  width: 16px;
  height: 17px;
  background: #ececec;
}
.vscroll .step {
  width: 5px;
  height: 3px;
}
.up {
  clip-path: polygon(50% 0, 100% 100%, 0 100%);
}
.down {
  clip-path: polygon(0 0, 100% 0, 50% 100%);
}
.messages .scroll {
  height: 17px;
  background: #f2f2f2;
}

/* status line */
.status {
  flex: none;
  display: flex;
  align-items: center;
  height: 25px;
  background: #f0eeee;
}
.status > span {
  display: flex;
  align-items: center;
  height: 20px;
  border-right: 1px solid #555;
}
.state {
  width: 103px;
  padding-left: 3px;
}
.blank {
  width: 75px;
}
.clock {
  width: 205px;
  padding-left: 5px;
}
.flag {
  width: 29px;
  justify-content: center;
}
.flag i {
  width: 17px;
  height: 17px;
  border: solid #d81c1c;
  border-width: 3px 4px;
  border-radius: 3px;
  background: #eef4ee;
}
.books {
  display: flex;
  align-items: center;
  margin-left: 30px;
}
.books button {
  height: 15px;
  padding: 0 10px 0 11px;
  border: 1px solid #8a8a8a;
  border-left-width: 0;
  border-radius: 0 6px 0 0;
  background: #fff;
}
.books button:first-child {
  border-left-width: 1px;
}
.books .current {
  border-width: 2px 2px 0 1px;
  border-color: #666;
}
.books .add {
  padding: 0 8px;
  border-radius: 2px;
  background: linear-gradient(#f4f4f4, #d6d6d6);
}

/* system taskbar */
.taskbar {
  flex: none;
  display: flex;
  align-items: center;
  height: 29px;
  background: linear-gradient(#3a4046, #0c1013 12%, #05080a);
  color: #fff;
  font: 12px/16px Roboto, "Segoe UI", sans-serif;
}
.start {
  margin: 0 24px 0 8px;
  height: 38px;
}
.pin {
  width: 16px;
  margin-right: 25px;
}
.tasks {
  display: flex;
  gap: 4px;
  margin-left: -10px;
}
.tasks button {
  display: flex;
  align-items: center;
  gap: 4px;
  width: 98px;
  height: 27px;
  padding-left: 6px;
  border: 1px solid #777e84;
  border-radius: 2px;
  background: linear-gradient(#70767c, #3a4046 45%, #15191c 50%, #20262a);
  white-space: nowrap;
  overflow: hidden;
}
.tasks .joined {
  margin-right: -4px;
  width: 102px;
  border-right: 0;
}
.tasks .current {
  background: linear-gradient(#c0c4c8, #989ca0 45%, #74797d 50%, #8f9498);
}
.tray {
  flex: 1;
  display: flex;
  align-items: center;
  gap: 8px;
  height: 100%;
  padding-left: 13px;
}
.lang {
  margin-right: 7px;
  padding-bottom: 5px;
}
.tray time {
  margin-left: auto;
}
.show-desktop {
  width: 12px;
  height: 27px;
  margin-left: 20px;
  border: 1px solid #555;
  background: linear-gradient(#33383c, #101315);
}
```
